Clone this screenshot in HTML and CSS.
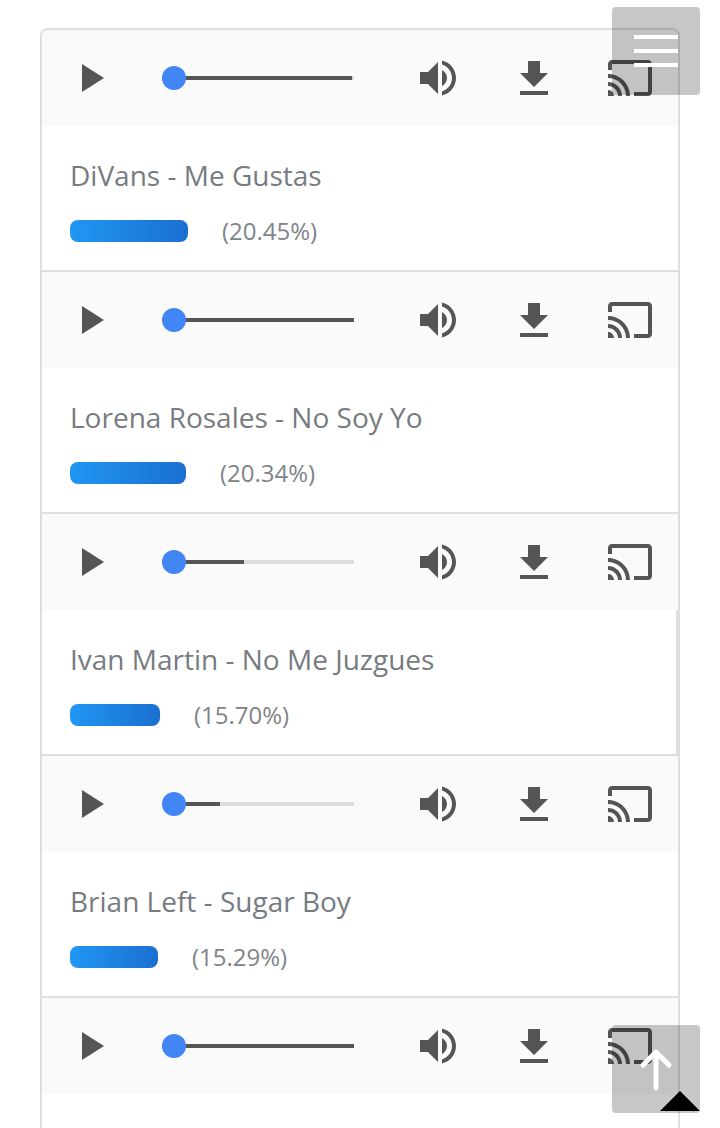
FILE: index.html
```html
<!DOCTYPE html>
<html lang="en">
<head>
<meta charset="utf-8">
<title>Ranking</title>
<link rel="stylesheet" href="styles.css">
</head>
<body>
<svg class="defs" width="0" height="0" aria-hidden="true">
  <symbol id="i-play" viewBox="0 0 24 24"><path d="M8 5v14l11-7z"/></symbol>
  <symbol id="i-vol" viewBox="0 0 24 24"><path d="M3 9v6h4l5 5V4L7 9H3zm13.5 3c0-1.77-1.02-3.29-2.5-4.03v8.05c1.48-.73 2.5-2.25 2.5-4.02zM14 3.23v2.06c2.89.86 5 3.54 5 6.71s-2.11 5.85-5 6.71v2.06c4.01-.91 7-4.49 7-8.77s-2.99-7.86-7-8.77z"/></symbol>
  <symbol id="i-down" viewBox="0 0 24 24"><path d="M19 9h-4V3H9v6H5l7 7 7-7zM5 18v2h14v-2H5z"/></symbol>
  <symbol id="i-cast" viewBox="0 0 24 24"><path d="M21 3H3c-1.1 0-2 .9-2 2v3h2V5h18v14h-7v2h7c1.1 0 2-.9 2-2V5c0-1.1-.9-2-2-2zM1 18v3h3c0-1.66-1.34-3-3-3zm0-4v2c2.76 0 5 2.24 5 5h2c0-3.87-3.13-7-7-7zm0-4v2c4.97 0 9 4.03 9 9h2c0-6.08-4.93-11-11-11z"/></symbol>
</svg>
<main class="card">
  <section class="row">
    <div class="player">
      <svg class="icon"><use href="#i-play"/></svg>
      <div class="slider"><span class="thumb"></span><div class="track"><div class="fill" style="width:99%"></div></div></div>
      <svg class="icon vol"><use href="#i-vol"/></svg>
      <svg class="icon dl"><use href="#i-down"/></svg>
      <svg class="icon"><use href="#i-cast"/></svg>
    </div>
    <div class="info">
      <h2 class="title">DiVans - Me Gustas</h2>
      <div class="stat"><div class="bar" style="width:118px"></div><span class="pct">(20.45%)</span></div>
    </div>
  </section>
  <section class="row">
    <div class="player">
      <svg class="icon"><use href="#i-play"/></svg>
      <div class="slider"><span class="thumb"></span><div class="track"><div class="fill" style="width:100%"></div></div></div>
      <svg class="icon vol"><use href="#i-vol"/></svg>
      <svg class="icon dl"><use href="#i-down"/></svg>
      <svg class="icon"><use href="#i-cast"/></svg>
    </div>
    <div class="info">
      <h2 class="title">Lorena Rosales - No Soy Yo</h2>
      <div class="stat"><div class="bar" style="width:116px"></div><span class="pct">(20.34%)</span></div>
    </div>
  </section>
  <section class="row">
    <div class="player">
      <svg class="icon"><use href="#i-play"/></svg>
      <div class="slider"><span class="thumb"></span><div class="track"><div class="fill" style="width:39%"></div></div></div>
      <svg class="icon vol"><use href="#i-vol"/></svg>
      <svg class="icon dl"><use href="#i-down"/></svg>
      <svg class="icon"><use href="#i-cast"/></svg>
    </div>
    <div class="info info-edge">
      <h2 class="title">Ivan Martin - No Me Juzgues</h2>
      <div class="stat"><div class="bar" style="width:90px"></div><span class="pct">(15.70%)</span></div>
    </div>
  </section>
  <section class="row">
    <div class="player">
      <svg class="icon"><use href="#i-play"/></svg>
      <div class="slider"><span class="thumb"></span><div class="track"><div class="fill" style="width:25.6%"></div></div></div>
      <svg class="icon vol"><use href="#i-vol"/></svg>
      <svg class="icon dl"><use href="#i-down"/></svg>
      <svg class="icon"><use href="#i-cast"/></svg>
    </div>
    <div class="info">
      <h2 class="title">Brian Left - Sugar Boy</h2>
      <div class="stat"><div class="bar" style="width:88px"></div><span class="pct">(15.29%)</span></div>
    </div>
  </section>
  <section class="row">
    <div class="player">
      <svg class="icon"><use href="#i-play"/></svg>
      <div class="slider"><span class="thumb"></span><div class="track"><div class="fill" style="width:100%"></div></div></div>
      <svg class="icon vol"><use href="#i-vol"/></svg>
      <svg class="icon dl"><use href="#i-down"/></svg>
      <svg class="icon"><use href="#i-cast"/></svg>
    </div>
    <div class="info"></div>
  </section>
</main>
<button class="float menu" aria-label="Menu"><span></span><span></span><span></span></button>
<button class="float up" aria-label="Back to top">
  <svg class="arrow" width="36" height="46" viewBox="0 0 36 46"><path d="M18 41V5M5 18 18 5l13 13"/></svg>
  <span class="corner"></span>
</button>
</body>
</html>
```
FILE: styles.css
```css
* { box-sizing: border-box; }
html, body { margin: 0; height: 1128px; overflow: hidden; background: #fff; }
body { font-family: "Open Sans", "Noto Sans", sans-serif; position: relative; }
.defs { position: absolute; }

.card {
  margin: 28px 40px 0;
  width: 640px;
  border: 2px solid #dedede;
  border-radius: 8px 8px 0 0;
  overflow: hidden;
}
.row { border-bottom: 2px solid #dedede; }
.row:last-child { border-bottom: 0; }

.player {
  height: 96px;
  background: #fafafa;
  display: flex;
  align-items: center;
  padding-left: 24px;
}
.icon { width: 48px; height: 48px; fill: #555; flex: none; margin-right: 48px; }
.icon:last-child { margin-right: 0; }
.dl { margin-top: 2px; }

.slider {
  width: 192px;
  height: 24px;
  margin-right: 60px;
  margin-left: 0;
  display: flex;
  align-items: center;
  position: relative;
}
.thumb {
  position: absolute;
  left: 0;
  top: 0;
  width: 24px;
  height: 24px;
  border-radius: 50%;
  background: #4285f4;
}
.track { width: 100%; height: 4px; background: #dcdcdc; padding-left: 12px; }
.fill { height: 4px; background: #555; }

.info { height: 144px; padding: 31px 0 0 28px; background: #fff; }
.info-edge { border-right: 2px solid #dedede; }
.title {
  margin: 0;
  font-size: 28px;
  line-height: 36px;
  font-weight: 400;
  color: #777b82;
}
.stat { display: flex; align-items: center; margin-top: 27px; gap: 34px; height: 22px; }
.bar {
  height: 22px;
  border-radius: 8px;
  background: linear-gradient(to right, #2196f3, #1a6fd0);
}
.pct { font-size: 24px; line-height: 22px; color: #808489; }

.float {
  position: absolute;
  left: 612px;
  width: 88px;
  height: 88px;
  padding: 0;
  border: 0;
  border-radius: 4px;
  background: rgba(0, 0, 0, .22);
}
.menu {
  top: 7px;
  display: flex;
  flex-direction: column;
  gap: 10px;
  padding: 28px 22px 0;
}
.menu span { display: block; height: 4px; width: 44px; background: #fff; }
.up { top: 1025px; overflow: hidden; }
.arrow {
  position: absolute;
  left: 26px;
  top: 22px;
  fill: none;
  stroke: #fff;
  stroke-width: 5;
  stroke-linecap: round;
  stroke-linejoin: round;
}
.corner {
  position: absolute;
  right: 0;
  bottom: 2px;
  width: 0;
  height: 0;
  border-left: 20px solid transparent;
  border-right: 20px solid transparent;
  border-bottom: 20px solid #000;
}
```
